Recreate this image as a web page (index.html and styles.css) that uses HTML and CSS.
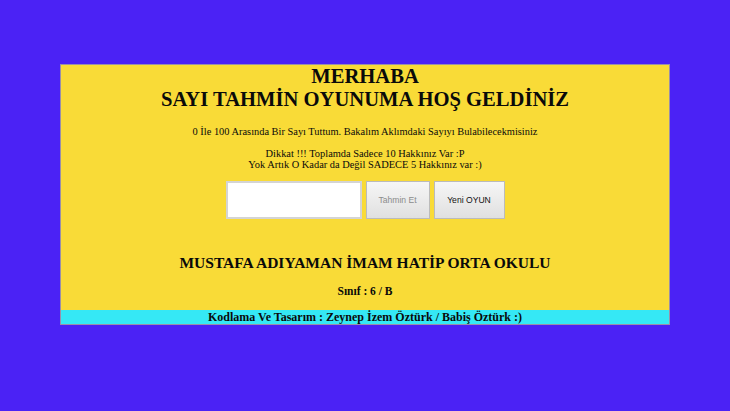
FILE: index.html
```html
<!DOCTYPE html>
<html lang="tr">
<head>
    <meta charset="UTF-8">
    <meta name="viewport" content="width=device-width, initial-scale=1.0">
    <title>Sayı Tahmin Oyunu</title>
    <link rel="stylesheet" href="styles.css">
</head>
<body>
    <div class="oyun">
        <h1>MERHABA<br>SAYI TAHMİN OYUNUMA HOŞ GELDİNİZ</h1>

        <p class="bilgi">0 İle 100 Arasında Bir Sayı Tuttum. Bakalım Aklımdaki Sayıyı Bulabilecekmisiniz</p>
        <p class="bilgi">Dikkat !!! Toplamda Sadece 10 Hakkınız Var :P<br>Yok Artık O Kadar da Değil SADECE 5 Hakkınız var :)</p>

        <div class="tahmin">
            <input type="text" id="sayi">
            <button id="tahminEt" disabled>Tahmin Et</button>
            <button id="yeni">Yeni OYUN</button>
        </div>

        <h2>MUSTAFA ADIYAMAN İMAM HATİP ORTA OKULU</h2>
        <p class="sinif">Sınıf : 6 / B</p>

        <footer>Kodlama Ve Tasarım : Zeynep İzem Öztürk / Babiş Öztürk :)</footer>
    </div>
</body>
</html>
```

FILE: styles.css
```css
body {
    font-family: "Liberation Serif", "Times New Roman", serif;
    background-color: #4b22f5;
    margin: 0;
    padding: 64px 0 0;
}
.oyun {
    width: 608px;
    margin: 0 auto;
    background-color: #f9db37;
    border: 1px solid #9a8fa8;
    text-align: center;
    color: #0a0a0a;
}
h1 {
    font-size: 20.6px;
    line-height: 23px;
    margin: 0 0 15px;
}
.bilgi {
    font-size: 10.4px;
    line-height: 11.5px;
    margin: 0;
}
.bilgi + .bilgi {
    margin-top: 10px;
}
.tahmin {
    display: flex;
    justify-content: center;
    gap: 4px;
    margin-top: 10px;
}
.tahmin input {
    box-sizing: border-box;
    width: 136px;
    height: 38px;
    padding: 0;
    border: 2px solid #d4d4d4;
    background: white;
}
.tahmin button {
    font-family: "Liberation Sans", Arial, sans-serif;
    font-size: 8.6px;
    height: 38px;
    width: 64px;
    padding: 0;
    border: 1px solid #bbb;
    background: linear-gradient(#f6f6f6, #e0e0e0);
    color: #111;
}
.tahmin #yeni {
    width: 71px;
}
.tahmin button:disabled {
    color: #8c8c8c;
}
h2 {
    font-size: 15.5px;
    line-height: 18px;
    margin: 35px 0 0;
}
.sinif {
    font-size: 11.5px;
    font-weight: bold;
    line-height: 13px;
    margin: 13px 0 12px;
}
footer {
    background-color: #35e8f5;
    font-size: 12px;
    font-weight: bold;
    line-height: 14px;
}
```
